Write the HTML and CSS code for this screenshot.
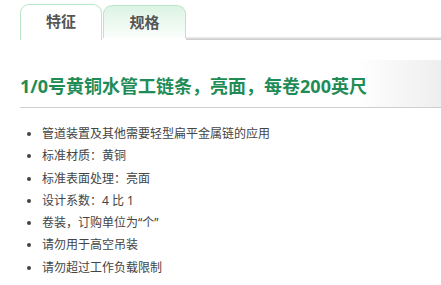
FILE: index.html
```html
<!DOCTYPE html>
<html>
<head>
  <meta charset="UTF-8">
  <title>产品详情</title>
  <link rel="stylesheet" href="styles.css">
</head>
<body>
  <div class="tabs">
    <div class="tab active">特征</div>
    <div class="tab">规格</div>
    <div class="tab-line"></div>
  </div>
  <div class="content">
    <div class="title-box">
      <h1>1/0号黄铜水管工链条，亮面，每卷200英尺</h1>
    </div>
    <ul class="features">
      <li>管道装置及其他需要轻型扁平金属链的应用</li>
      <li>标准材质：黄铜</li>
      <li>标准表面处理：亮面</li>
      <li>设计系数：4 比 1</li>
      <li>卷装，订购单位为“个”</li>
      <li>请勿用于高空吊装</li>
      <li>请勿超过工作负载限制</li>
    </ul>
  </div>
</body>
</html>
```

FILE: styles.css
```css
body {
  margin: 0;
  background-color: #fff;
  font-family: "Noto Sans", "Noto Sans CJK SC", sans-serif;
}

.tabs {
  display: flex;
  align-items: flex-end;
  padding-top: 4px;
  padding-left: 20px;
}

.tab {
  box-sizing: border-box;
  width: 83px;
  height: 33px;
  border: 1px solid #b8e6c6;
  border-bottom: none;
  border-radius: 9px 9px 0 0;
  background: linear-gradient(#dcf3e3, #fbfefc);
  color: #555;
  font-size: 15px;
  font-weight: bold;
  text-align: center;
  line-height: 32px;
  margin-bottom: 2px;
}

.tab.active {
  width: 82px;
  height: 36px;
  background: #fff;
  margin-right: 1px;
  margin-bottom: 0;
}

.tab-line {
  flex: 1;
  height: 3px;
  margin-bottom: 0;
  background: linear-gradient(#f0f0f0, #c8c8c8);
}

.content {
  padding-left: 20px;
}

.title-box {
  margin-top: 20px;
  height: 47px;
  border-bottom: 1px solid #cfcfcf;
  background: linear-gradient(to right, #fff 80%, #eee);
}

h1 {
  margin: 0;
  padding-top: 15px;
  color: #1f8c57;
  font-size: 18px;
  font-weight: bold;
  line-height: 22px;
}

.features {
  margin: 15px 0 0;
  padding-left: 22px;
  color: #444;
  font-size: 12px;
  line-height: 22.3px;
}
```
